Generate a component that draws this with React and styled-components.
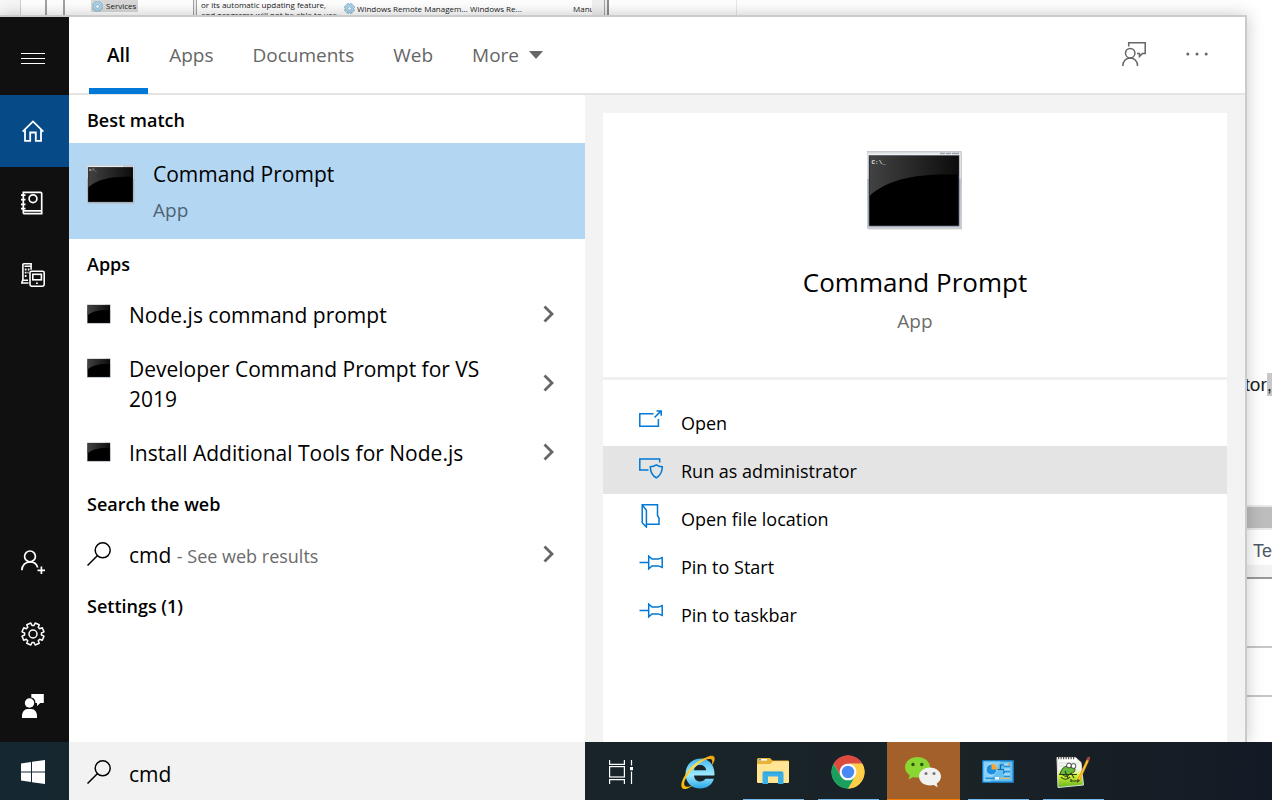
import React, { useId } from "react";
import styled, { createGlobalStyle, css } from "styled-components";

const GlobalStyle = createGlobalStyle`
  *, *::before, *::after { box-sizing: border-box; }
  body {
    margin: 0;
    background: #fff;
    color: #000;
    font-family: "Open Sans", "Noto Sans", sans-serif;
  }
  button, input { font: inherit; color: inherit; }
  ul { list-style: none; margin: 0; padding: 0; }
  h1, h2, p { margin: 0; font-weight: 400; }
  svg { display: block; flex: none; }
`;

/* ---------- page frame ---------- */

const Screen = styled.div`
  min-height: 100vh;
  display: grid;
  grid-template-columns: minmax(0, 1fr) 25px;
  grid-template-rows: 15px minmax(0, 1fr) 58px;
  overflow: hidden;
`;

const resetButton = css`
  border: 0;
  padding: 0;
  margin: 0;
  background: transparent;
  text-align: left;
  cursor: pointer;
`;

/* ---------- windows behind the flyout ---------- */

const BackWindows = styled.div`
  grid-column: 1 / -1;
  display: flex;
  height: 15px;
  overflow: hidden;
  font-size: 8px;
  line-height: 10px;
  color: #222;
  white-space: nowrap;
`;

const BackPane = styled.div`
  width: ${(p) => p.$width}px;
  flex: none;
  background: ${(p) => p.$bg || "#fff"};
  border-right: ${(p) => p.$line || 0}px solid ${(p) => p.$lineColor || "#a3a3a3"};
  padding-left: ${(p) => p.$indent || 0}px;
`;

const BackSelected = styled.span`
  display: inline-flex;
  align-items: center;
  gap: 3px;
  height: 12px;
  padding: 0 2px 0 1px;
  background: #d9d9d9;
`;

const BackRow = styled.div`
  display: flex;
  align-items: center;
  padding-top: 3px;
  gap: 2px;
`;

const BackCell = styled.span`
  width: ${(p) => p.$width}px;
  overflow: hidden;
  flex: none;
`;

const SideWindow = styled.div`
  display: flex;
  flex-direction: column;
  overflow: hidden;
  background: #fff;
  font-family: "Liberation Sans", Arial, sans-serif;
`;

const SideBand = styled.div`
  flex: none;
  height: ${(p) => p.$height}px;
  background: ${(p) => p.$bg || "#fff"};
  border-bottom: ${(p) => p.$line || 0}px solid ${(p) => p.$lineColor || "#c6c6c6"};
`;

const SideText = styled.p`
  flex: none;
  display: flex;
  justify-content: flex-end;
  font-size: 19px;
  line-height: 23px;
  color: #222;
`;

const SideMark = styled.mark`
  background: #c8c8c8;
  color: inherit;
`;

const SideTab = styled.p`
  flex: none;
  padding-left: 6px;
  height: 35px;
  font-size: 18px;
  line-height: 43px;
  color: #505a66;
  white-space: nowrap;
`;

/* ---------- flyout ---------- */

const Flyout = styled.main`
  position: relative;
  z-index: 1;
  display: flex;
  border-top: 2px solid #cbcbcb;
  border-right: 2px solid #cbcbcb;
  background: #fff;
  box-shadow: 0 0 16px rgba(0, 0, 0, 0.22);
`;

const Rail = styled.nav`
  width: 69px;
  flex: none;
  display: flex;
  flex-direction: column;
  background: #101010;
  color: #fff;
`;

const RailButton = styled.button`
  ${resetButton}
  height: ${(p) => (p.$menu ? 78 : 72)}px;
  padding: ${(p) => (p.$menu ? "4px 0 0" : "0")};
  padding-right: 3px;
  display: flex;
  align-items: center;
  justify-content: center;
  background: ${(p) => (p.$active ? "#064b87" : "transparent")};
`;

const RailSpacer = styled.div`
  flex: 1;
`;

const Panel = styled.div`
  flex: 1;
  min-width: 0;
  display: flex;
  flex-direction: column;
`;

const TopBar = styled.header`
  height: 78px;
  flex: none;
  display: flex;
  align-items: stretch;
  justify-content: space-between;
  padding: 0 37px 0 20px;
  border-bottom: 2px solid #e4e4e4;
`;

const Group = styled.div`
  display: flex;
  align-items: stretch;
  gap: ${(p) => p.$gap}px;
`;

const Tab = styled.button`
  ${resetButton}
  display: flex;
  align-items: center;
  gap: 10px;
  margin-bottom: -1px;
  padding: 5px 18px 0;
  font-size: 19px;
  line-height: 24px;
  border-bottom: 6px solid ${(p) => (p.$active ? "#0078d7" : "transparent")};
  font-weight: ${(p) => (p.$active ? 600 : 400)};
  color: ${(p) => (p.$active ? "#000" : "#666")};
`;

const ToolButton = styled.button`
  ${resetButton}
  display: flex;
  align-items: center;
  padding-bottom: 2px;
  color: #666;
`;

const Body = styled.div`
  flex: 1;
  display: flex;
`;

const Results = styled.div`
  width: 516px;
  flex: none;
`;

const SectionTitle = styled.h2`
  height: 48px;
  padding: 2px 18px 0;
  font-size: 18px;
  line-height: 46px;
  font-weight: 600;
`;

const BestMatch = styled.button`
  ${resetButton}
  width: 100%;
  height: 96px;
  display: flex;
  align-items: flex-start;
  gap: 18px;
  padding: 16px 18px 0;
  background: #b3d6f2;
`;

const BestIcon = styled.span`
  padding-top: 6px;
`;

const BestText = styled.span`
  display: flex;
  flex-direction: column;
  gap: 9px;
`;

const ItemName = styled.span`
  font-size: 21px;
  line-height: 30px;
`;

const ItemHint = styled.span`
  font-size: ${(p) => (p.$dim ? 19 : 18)}px;
  line-height: 24px;
  color: ${(p) => (p.$dim ? "#4f6373" : "#6b6b6b")};
`;

const ResultRow = styled.li`
  display: flex;
  align-items: stretch;
`;

const ResultButton = styled.button`
  ${resetButton}
  flex: 1;
  display: flex;
  gap: 18px;
  padding: 13px 0 11px 18px;
`;

const RowIcon = styled.span`
  width: 24px;
  height: 28px;
  flex: none;
  display: flex;
  align-items: center;
`;

const ExpandButton = styled.button`
  ${resetButton}
  width: 72px;
  display: flex;
  align-items: center;
  justify-content: center;
  color: #666;
`;

const Preview = styled.div`
  flex: 1;
  min-width: 0;
  display: flex;
  padding: 18px 18px 0;
  background: #f3f3f3;
`;

const PreviewCard = styled.article`
  flex: 1;
  background: #fff;
`;

const Hero = styled.div`
  height: 267px;
  display: flex;
  flex-direction: column;
  align-items: center;
  padding-top: 38px;
  border-bottom: 3px solid #f0f0f0;
`;

const HeroTitle = styled.h1`
  margin-top: 34px;
  font-size: 26px;
  line-height: 36px;
`;

const HeroKind = styled.p`
  margin-top: 9px;
  font-size: 19px;
  line-height: 24px;
  color: #6b6b6b;
`;

const Actions = styled.ul`
  padding: 18px 0 12px;
`;

const ActionButton = styled.button`
  ${resetButton}
  width: 100%;
  height: 48px;
  display: flex;
  align-items: center;
  gap: 18px;
  padding: 2px 36px 0;
  font-size: 18px;
  line-height: 24px;
  background: ${(p) => (p.$active ? "#e4e4e4" : "transparent")};
`;

const ActionIcon = styled.span`
  height: 30px;
  color: #0078d7;
`;

/* ---------- taskbar ---------- */

const Taskbar = styled.footer`
  position: relative;
  z-index: 2;
  grid-column: 1 / -1;
  display: flex;
  background: linear-gradient(90deg, #152730 0%, #18242a 45%, #1a2326 75%, #131a25 100%);
`;

const StartButton = styled.button`
  ${resetButton}
  width: 69px;
  padding: 2px 3px 0 0;
  display: flex;
  align-items: center;
  justify-content: center;
`;

const SearchBox = styled.label`
  width: 516px;
  flex: none;
  display: flex;
  align-items: center;
  gap: 18px;
  padding: 2px 18px 0;
  background: #f2f2f2;
`;

const SearchInput = styled.input`
  flex: 1;
  min-width: 0;
  border: 0;
  padding: 4px 0 0;
  background: transparent;
  outline: none;
  font-size: 21px;
  line-height: 30px;
`;

const TaskViewButton = styled.button`
  ${resetButton}
  width: 75px;
  padding: 2px 4px 0 0;
  display: flex;
  align-items: center;
  justify-content: center;
`;

const Apps = styled.div`
  display: flex;
  gap: 2px;
  padding-left: 2px;
`;

const AppButton = styled.button`
  ${resetButton}
  width: 73px;
  display: flex;
  flex-direction: column;
  align-items: center;
  background: ${(p) => (p.$alert ? "#a4602a" : "transparent")};
`;

const AppIcon = styled.span`
  flex: 1;
  padding: 2px 2px 0 0;
  display: flex;
  align-items: center;
`;

const Running = styled.span`
  width: ${(p) => (p.$alert ? "100%" : "61px")};
  height: 1px;
  background: ${(p) => (p.$open ? (p.$alert ? "#f57b00" : "#76b9ed") : "transparent")};
`;

/* ---------- icons ---------- */

function Icon({ width = 24, height = 24, stroke = 1.5, children }) {
  return (
    <svg
      width={width}
      height={height}
      viewBox={`0 0 ${width} ${height}`}
      fill="none"
      stroke="currentColor"
      strokeWidth={stroke}
      aria-hidden="true"
    >
      {children}
    </svg>
  );
}

const MenuIcon = () => (
  <Icon height={11} stroke={1}>
    <path d="M0 .5h24M0 5.5h24M0 10.5h24" />
  </Icon>
);

const HomeIcon = () => (
  <Icon width={22} height={22} stroke={1.8}>
    <path d="M.6 11.6 11 1.4l10.400 10.200M3 9.500V20.800h5.200v-8.300h5.600v8.300H19V9.500" />
  </Icon>
);

const NotebookIcon = () => (
  <Icon stroke={1.7}>
    <path d="M2.300 1.300h17.200a1.200 1.200 0 0 1 1.200 1.200v20.200H3.500a1.200 1.200 0 0 1-1.200-1.200zM2.300 19.800h18.400" />
    <circle cx="12" cy="7.700" r="3.900" />
    <path d="M0 4.200h4.500M0 8.700h4.500M0 13.400h4.500M0 17.600h4.500" />
  </Icon>
);

const DevicesIcon = () => (
  <Icon stroke={1.6}>
    <path d="M1.900 16.500V1.800a1 1 0 0 1 1-1h7.200v6M3.500 3.200h6M1.900 16.500.8 20h6.700M1.500 17.300h5.500" />
    <path d="M3.800 6.500h1.700M6.800 6.500h1.700M3.800 9.700h1.700M6.500 9.700h1M3.800 13h1.700" strokeWidth="1.800" />
    <rect x="9" y="8.200" width="14.200" height="15" rx="1.600" />
    <rect x="11.800" y="11.300" width="8.600" height="5.500" />
    <path d="M15 20.200h1.800" />
  </Icon>
);

const AddPersonIcon = () => (
  <Icon stroke={1.7}>
    <circle cx="9" cy="6.400" r="5.400" />
    <path d="M.9 20.300c0-5 3.600-8.500 8.100-8.500 3.700 0 6.700 2.300 7.700 5.600M20.400 16.500v7.500M16.500 20.300H24" />
  </Icon>
);

const gearPath = (() => {
  const points = [];
  for (let i = 0; i < 8; i += 1) {
    const mid = (i * Math.PI) / 4 + Math.PI / 8;
    [[-0.27, 8.5], [-0.2, 11.2], [0.2, 11.2], [0.27, 8.5]].forEach(([turn, r]) => {
      const a = mid + turn;
      points.push(`${(12 + r * Math.cos(a)).toFixed(2)} ${(12 + r * Math.sin(a)).toFixed(2)}`);
    });
  }
  return `M${points.join("L")}Z`;
})();

const GearIcon = () => (
  <Icon>
    <path d={gearPath} strokeLinejoin="round" />
    <circle cx="12" cy="12" r="4" />
  </Icon>
);

const FeedbackSolidIcon = () => (
  <Icon width={22}>
    <g fill="currentColor" stroke="none">
      <path d="M9.300 0H21.800v9h-3.500L15 12V9h-1.500C13.500 6 12 3.800 9.300 3.500z" />
      <circle cx="7.500" cy="9" r="4.700" />
      <path d="M0 24v-2c0-4 2.500-7 5.500-7h4c3 0 5.500 3 5.500 7v2z" />
    </g>
  </Icon>
);

const FeedbackIcon = () => (
  <Icon>
    <path d="M6.700 4.500V.8h16.500v10.700h-2.700l-3 3v-3H15" />
    <circle cx="8.200" cy="11.200" r="4.700" />
    <path d="M.8 24c0-4.800 3.100-8 7.400-8s7.400 3.200 7.400 8" />
  </Icon>
);

const MoreDotsIcon = () => (
  <Icon width={22} height={4}>
    <g fill="currentColor" stroke="none">
      <circle cx="1.800" cy="2" r="1.500" />
      <circle cx="11" cy="2" r="1.500" />
      <circle cx="20.200" cy="2" r="1.500" />
    </g>
  </Icon>
);

const CaretIcon = () => (
  <Icon width={14} height={8}>
    <path d="M0 0h14L7 8z" fill="currentColor" stroke="none" />
  </Icon>
);

const ChevronIcon = () => (
  <Icon width={12} height={18} stroke={2.8}>
    <path d="m1.500 1.500 7.500 7.500-7.500 7.500" />
  </Icon>
);

const SearchIcon = () => (
  <Icon stroke={1.5}>
    <circle cx="15.700" cy="8.300" r="7.500" />
    <path d="M.5 23.500 10.300 13.700" />
  </Icon>
);

const OpenIcon = () => (
  <Icon>
    <path d="M14.500 5.800H.8v12.400h18.600V11" />
    <path d="m15.500 9.500 6.400-6.400M17.500 3h4.700v4.700" />
  </Icon>
);

const AdminIcon = () => (
  <Icon>
    <path d="M20.700 6.500V3H.8v11h8.700" />
    <path d="M17.300 8.800c1.800 1.200 3.700 1.800 6 1.900-.1 5.200-1.700 8.800-6 11.100-4.300-2.300-5.900-5.900-6-11.100 2.300-.1 4.200-.7 6-1.900z" />
  </Icon>
);

const FolderOutlineIcon = () => (
  <Icon>
    <path d="M3.200.8v18l4.200 4.200V6.200z" />
    <path d="M3.200.8h15.300v10.700l1.500 2.500v6.300H7.400" />
  </Icon>
);

const PinIcon = () => (
  <Icon>
    <path d="M.5 10.500h9M9.700 4.200v12.600l3.300-2.900h6.300l3.900 1.500V5.600l-3.900 1.500H13z" />
  </Icon>
);

const WindowsIcon = () => (
  <svg width="24" height="24" viewBox="0 0 24 24" fill="#fff" aria-hidden="true">
    <path d="M0 3.400 10 2v9.500H0zM11 1.850 24 0v11.500H11zM0 12.500h10V22L0 20.600zM11 12.500h13V24l-13-1.850z" />
  </svg>
);

function ConsoleIcon({ width, height, caption }) {
  const id = useId();
  return (
    <svg width={width} height={height} viewBox="0 0 96 79" preserveAspectRatio="none" aria-hidden="true">
      <defs>
        <linearGradient id={`${id}f`} x1="0" y1="0" x2="0" y2="1">
          <stop offset="0" stopColor="#c9ced3" />
          <stop offset=".06" stopColor="#fafafa" />
          <stop offset=".36" stopColor="#f4f5f7" />
          <stop offset=".37" stopColor="#bcc6d2" />
          <stop offset="1" stopColor="#cfd8e4" />
        </linearGradient>
        <linearGradient id={`${id}g`} x1="0" y1="0" x2="1" y2="0">
          <stop offset="0" stopColor="#424242" />
          <stop offset="1" stopColor="#0c0c0c" />
        </linearGradient>
      </defs>
      <rect x="1" y="2" width="94" height="76.500" fill="#a5a5a5" opacity=".45" />
      <rect width="94" height="77" fill={`url(#${id}f)`} stroke="#b9bec6" strokeWidth=".8" />
      <path d="M73 2.500h5M79 2.500h5M85 2.500h7" stroke="#9da5ae" strokeWidth="1.500" />
      <rect x="2" y="4.500" width="90" height="70.500" fill="#000" stroke="#59606f" strokeWidth=".8" />
      <path d="M2.500 5h89v19C55 22 22 27 2.500 45z" fill={`url(#${id}g)`} />
      {caption && (
        <text x="4.500" y="12.500" fill="#e6e6e6" fontSize="6" fontWeight="700" fontFamily="Liberation Mono, monospace">
          C:\_
        </text>
      )}
    </svg>
  );
}

const TaskViewIcon = () => (
  <Icon stroke={1.200}>
    <g stroke="#fff">
      <path d="M.6 0v4.400h14.800V0M.6 24v-4.400h14.800V24" />
      <rect x=".6" y="6.600" width="14.800" height="10.400" />
      <path d="M22.500 0v5.500M22.500 11.500V24" />
    </g>
    <rect x="21" y="7" width="3" height="3.200" fill="#fff" stroke="none" />
  </Icon>
);

const ExplorerEIcon = () => (
  <svg width="34" height="34" viewBox="0 0 34 34" aria-hidden="true">
    <defs>
      <linearGradient id="ieBlue" x1="0" y1="0" x2="0" y2="1">
        <stop offset="0" stopColor="#45b9ee" />
        <stop offset=".55" stopColor="#9eeaff" />
        <stop offset="1" stopColor="#29a4e6" />
      </linearGradient>
      <linearGradient id="ieGold" x1="0" y1="1" x2="1" y2="0">
        <stop offset="0" stopColor="#f3b600" />
        <stop offset=".6" stopColor="#ffdf57" />
        <stop offset="1" stopColor="#e99b00" />
      </linearGradient>
    </defs>
    <path
      d="M33.400 20.500H13c.3 3.700 2.700 6 6 6 2.500 0 4.300-1 5.300-2.800h8.600C31.300 29.600 26 33.500 19.200 33.500 10.600 33.500 4.500 27.300 4.500 18.900 4.500 10.300 11 3.500 19.300 3.500c8.900 0 14.900 6.900 14.100 17zM13 15.300h12.200c-.4-3.300-2.700-5.300-6.100-5.300s-5.700 2-6.100 5.300z"
      fill="url(#ieBlue)"
    />
    <path
      d="M25 2.500C29 .2 32.400.2 33.300 2c1.100 2-.1 5.300-2.600 8.600.8-3 .9-5.300-.5-6.300C27.400 2.500 19 6.700 12.200 13.700 4.700 21.200 1.500 28.500 4 31c1.700 1.500 5 .6 8.700-1.600C8 33.600 3 35.400 1.100 33.100-1.600 29.700 2.800 20.200 10.300 12.100 15.200 7 20.500 4 25 2.500z"
      fill="url(#ieGold)"
    />
  </svg>
);

const FilesIcon = () => (
  <svg width="32" height="28" viewBox="0 0 32 28" aria-hidden="true">
    <path d="M0 1.500A1.500 1.500 0 0 1 1.500 0H13l2.500 2.600H31A1 1 0 0 1 32 3.600V10H0z" fill="#e9b33a" />
    <path d="M2 1.800h8" stroke="#fff" strokeWidth="1.500" />
    <path d="M2 1.800h2" stroke="#36a3df" strokeWidth="1.500" />
    <path d="M0 6h13.500l2.200-2.800H31a1 1 0 0 1 1 1V24a1 1 0 0 1-1 1H1a1 1 0 0 1-1-1z" fill="#ffe594" />
    <path d="M5.500 26V15.500a2 2 0 0 1 2-2h17a2 2 0 0 1 2 2V26h-5.500v-7.500H11V26z" fill="#3bb0e8" />
    <path d="M5.500 13.500h21l-2 2h-17z" fill="#2494ce" opacity=".4" />
  </svg>
);

const ChromeIcon = () => (
  <svg width="34" height="34" viewBox="0 0 48 48" aria-hidden="true">
    <circle cx="24" cy="24" r="23" fill="#fff" />
    <path d="M3.650 12.250A23.500 23.500 0 0 1 44.350 12.250H24A11.750 11.750 0 0 0 13.820 29.870z" fill="#dc4b3e" />
    <path d="M44.350 12.250A23.500 23.500 0 0 1 24 47.500L34.180 29.870A11.750 11.750 0 0 0 24 12.250z" fill="#ffcd46" />
    <path d="M24 47.500A23.500 23.500 0 0 1 3.650 12.250L13.820 29.870A11.750 11.750 0 0 0 34.180 29.870z" fill="#1a9f5c" />
    <circle cx="24" cy="24" r="11" fill="#fff" />
    <circle cx="24" cy="24" r="8.800" fill="#4a88f4" />
  </svg>
);

const WeChatIcon = () => (
  <svg width="38" height="32" viewBox="0 0 38 32" aria-hidden="true">
    <path d="M13.500 1C6.300 1 1 5.600 1 11.300c0 3.300 1.700 6 4.700 8L4.500 23.500l4.800-2.500c1.400.4 2.700.6 4.200.6C20.600 21.600 26 17 26 11.300S20.600 1 13.500 1z" fill="#8ad633" />
    <path d="M26 11.500c-6.200 0-11 4-11 9s4.800 9 11 9c1.300 0 2.500-.2 3.700-.5l4 2.200-1-3.600c2.500-1.700 4.300-4.200 4.300-7.100 0-5-4.800-9-11-9z" fill="#f1f1ef" />
    <circle cx="9" cy="8.500" r="1.700" fill="#2d5312" />
    <circle cx="17.800" cy="8.500" r="1.700" fill="#2d5312" />
    <circle cx="22" cy="17.500" r="1.500" fill="#777" />
    <circle cx="30" cy="17.500" r="1.500" fill="#777" />
  </svg>
);

const ControlPanelIcon = () => (
  <svg width="32" height="23" viewBox="0 0 32 23" aria-hidden="true">
    <rect width="32" height="23" rx="1" fill="#1677b8" />
    <rect x="1.500" y="1.500" width="29" height="20" fill="#62bff4" />
    <path d="M1.500 1.500h17l-10 20h-7z" fill="#82d0fb" />
    <circle cx="9.500" cy="9.500" r="5.500" fill="#1a8ee0" stroke="#d8f1ff" strokeWidth=".8" />
    <path d="M9.500 9.500V3.500a6 6 0 0 1 6 6z" fill="#f9a533" />
    <path d="M15.500 9.500h3v-4.500H22M18.500 9.500H22V14" stroke="#12679f" strokeWidth="1.200" fill="none" />
    <path d="M22 4.500h6M22 9.500h6M22 14.500h6" stroke="#9bdcff" strokeWidth="2.500" />
    <path d="M22 6.300h6M22 11.300h6M22 16.300h6" stroke="#1c7fc0" strokeWidth="1" />
    <path d="M26.500 4.500H28" stroke="#f58a1d" strokeWidth="2" />
    <path d="M3.500 18.300h9" stroke="#1c7fc0" strokeWidth="1.200" />
    <path d="M13 18.300h4" stroke="#fff" strokeWidth="2.500" />
    <path d="M18 18.300h10" stroke="#f3bd5e" strokeWidth="1.200" />
  </svg>
);

const NotepadPlusIcon = () => (
  <svg width="34" height="34" viewBox="0 0 34 34" aria-hidden="true">
    <defs>
      <linearGradient id="nppPage" x1="0" y1="0" x2="0" y2="1">
        <stop offset="0" stopColor="#fff" />
        <stop offset=".4" stopColor="#f3f7e8" />
        <stop offset=".6" stopColor="#d9ee33" />
        <stop offset="1" stopColor="#5fb51e" />
      </linearGradient>
    </defs>
    <path d="M1 2.500h18.500l5.500 5 2.500 22.500L2 32.500z" fill="url(#nppPage)" stroke="#dedede" />
    <path d="M2 3h17" stroke="#555" strokeWidth="2.500" strokeDasharray="1.200 1.300" />
    <path d="M3 8h18M3 11h5" stroke="#d3d6dc" />
    <path d="M4 19c2-7 6-9 11-8 4 .5 5 4 3 6-2 1.500-4 1-5 3-1 2-4 2-6 0z" fill="#65b83a" stroke="#26450f" strokeWidth=".9" />
    <circle cx="13" cy="10.500" r="2.400" fill="#fff" stroke="#222" strokeWidth=".8" />
    <circle cx="17.500" cy="11" r="2.400" fill="#fff" stroke="#222" strokeWidth=".8" />
    <path d="M3 19.500h18M5 22c2 3 7 3 9 0M9 16l3 7M15 18l3 5M15 26h8M15 24v3" stroke="#263d15" strokeWidth="1.100" fill="none" />
    <path d="M22.500 25.500 32.300 4" stroke="#e39b19" strokeWidth="2.800" />
    <path d="M22.900 24.500 32 5" stroke="#ffd04e" />
    <path d="M31.700 5.300 33.200 2" stroke="#a5443d" strokeWidth="2.800" />
    <path d="m21.500 24-.5 4 3-2.500z" fill="#5b4426" />
  </svg>
);

const ServiceGear = () => (
  <svg width="11" height="11" viewBox="0 0 24 24" fill="#b8d9ea" stroke="#7fb4d2" strokeWidth="2" aria-hidden="true">
    <path d={gearPath} />
    <circle cx="12" cy="12" r="4" fill="#fff" />
  </svg>
);

/* ---------- content ---------- */

const tabs = ["All", "Apps", "Documents", "Web"];

const appResults = [
  "Node.js command prompt",
  "Developer Command Prompt for VS 2019",
  "Install Additional Tools for Node.js",
];

const actions = [
  { label: "Open", icon: OpenIcon },
  { label: "Run as administrator", icon: AdminIcon, active: true },
  { label: "Open file location", icon: FolderOutlineIcon },
  { label: "Pin to Start", icon: PinIcon },
  { label: "Pin to taskbar", icon: PinIcon },
];

const taskbarApps = [
  { name: "Internet Explorer", icon: ExplorerEIcon },
  { name: "File Explorer", icon: FilesIcon, open: true },
  { name: "Chrome", icon: ChromeIcon, open: true },
  { name: "WeChat", icon: WeChatIcon, open: true, alert: true },
  { name: "Control Panel", icon: ControlPanelIcon, open: true },
  { name: "Notepad++", icon: NotepadPlusIcon, open: true },
];

function Result({ icon, label, children }) {
  return (
    <ResultRow>
      <ResultButton type="button">
        <RowIcon>{icon}</RowIcon>
        <ItemName>{children}</ItemName>
      </ResultButton>
      <ExpandButton type="button" aria-label={`More about ${label}`}>
        <ChevronIcon />
      </ExpandButton>
    </ResultRow>
  );
}

export default function App() {
  return (
    <>
      <GlobalStyle />
      <Screen>
        <BackWindows>
          <BackPane $width={21} $bg="#f7f7f7" $line={1} $lineColor="#cfcfcf" />
          <BackPane $width={26} $line={2} />
          <BackPane $width={18} $line={2} />
          <BackPane $width={129} $line={1} $indent={26}>
            <BackSelected>
              <ServiceGear />
              Services
            </BackSelected>
          </BackPane>
          <BackPane $width={3} $bg="#eee" $line={1} />
          <BackPane $width={147} $indent={4}>
            or its automatic updating feature,
            <br />
            and programs will not be able to use
          </BackPane>
          <BackPane $width={248}>
            <BackRow>
              <ServiceGear />
              <BackCell $width={111}>Windows Remote Managem...</BackCell>
              <BackCell $width={101}>Windows Re...</BackCell>
              <BackCell $width={19}>Manu</BackCell>
            </BackRow>
          </BackPane>
          <BackPane $width={13} $bg="#f0f0f0" $line={1} />
          <BackPane $width={4} $bg="#eee" $line={2} $lineColor="#8c8c8c" />
          <BackPane $width={128} $line={1} $lineColor="#e8e8e8" />
        </BackWindows>

        <Flyout>
          <Rail aria-label="Search sidebar">
            <RailButton type="button" $menu aria-label="Menu"><MenuIcon /></RailButton>
            <RailButton type="button" $active aria-label="Home"><HomeIcon /></RailButton>
            <RailButton type="button" aria-label="Notebook"><NotebookIcon /></RailButton>
            <RailButton type="button" aria-label="Devices"><DevicesIcon /></RailButton>
            <RailSpacer />
            <RailButton type="button" aria-label="Sign in"><AddPersonIcon /></RailButton>
            <RailButton type="button" aria-label="Settings"><GearIcon /></RailButton>
            <RailButton type="button" aria-label="Feedback"><FeedbackSolidIcon /></RailButton>
          </Rail>

          <Panel>
            <TopBar>
              <Group $gap={3}>
                {tabs.map((name) => (
                  <Tab type="button" key={name} $active={name === "All"}>{name}</Tab>
                ))}
                <Tab type="button">More <CaretIcon /></Tab>
              </Group>
              <Group $gap={40}>
                <ToolButton type="button" aria-label="Send feedback"><FeedbackIcon /></ToolButton>
                <ToolButton type="button" aria-label="Options"><MoreDotsIcon /></ToolButton>
              </Group>
            </TopBar>

            <Body>
              <Results>
                <section>
                  <SectionTitle>Best match</SectionTitle>
                  <BestMatch type="button">
                    <BestIcon><ConsoleIcon width={48} height={39} caption /></BestIcon>
                    <BestText>
                      <ItemName>Command Prompt</ItemName>
                      <ItemHint $dim>App</ItemHint>
                    </BestText>
                  </BestMatch>
                </section>
                <section>
                  <SectionTitle>Apps</SectionTitle>
                  <ul>
                    {appResults.map((name) => (
                      <Result key={name} label={name} icon={<ConsoleIcon width={24} height={20} />}>
                        {name}
                      </Result>
                    ))}
                  </ul>
                </section>
                <section>
                  <SectionTitle>Search the web</SectionTitle>
                  <ul>
                    <Result label="cmd" icon={<SearchIcon />}>
                      cmd <ItemHint>- See web results</ItemHint>
                    </Result>
                  </ul>
                </section>
                <section>
                  <SectionTitle>Settings (1)</SectionTitle>
                </section>
              </Results>

              <Preview>
                <PreviewCard>
                  <Hero>
                    <ConsoleIcon width={96} height={79} caption />
                    <HeroTitle>Command Prompt</HeroTitle>
                    <HeroKind>App</HeroKind>
                  </Hero>
                  <Actions>
                    {actions.map(({ label, icon: Glyph, active }) => (
                      <li key={label}>
                        <ActionButton type="button" $active={active}>
                          <ActionIcon><Glyph /></ActionIcon>
                          {label}
                        </ActionButton>
                      </li>
                    ))}
                  </Actions>
                </PreviewCard>
              </Preview>
            </Body>
          </Panel>
        </Flyout>

        <SideWindow>
          <SideBand $height={358} />
          <SideText>tor<SideMark>,</SideMark></SideText>
          <SideBand $height={111} $line={2} $lineColor="#e9e9e9" />
          <SideBand $height={23} $bg="#bdbdbd" $line={2} $lineColor="#e9e9e9" />
          <SideTab>Te</SideTab>
          <SideBand $height={14} $bg="#f3f3f3" $line={2} $lineColor="#9a9a9a" />
          <SideBand $height={69} $line={2} />
          <SideBand $height={49} $line={2} />
        </SideWindow>

        <Taskbar>
          <StartButton type="button" aria-label="Start"><WindowsIcon /></StartButton>
          <SearchBox>
            <SearchIcon />
            <SearchInput type="text" defaultValue="cmd" aria-label="Search" />
          </SearchBox>
          <TaskViewButton type="button" aria-label="Task View"><TaskViewIcon /></TaskViewButton>
          <Apps>
            {taskbarApps.map(({ name, icon: Glyph, open, alert }) => (
              <AppButton type="button" key={name} $alert={alert} aria-label={name}>
                <AppIcon><Glyph /></AppIcon>
                <Running $open={open} $alert={alert} />
              </AppButton>
            ))}
          </Apps>
        </Taskbar>
      </Screen>
    </>
  );
}
